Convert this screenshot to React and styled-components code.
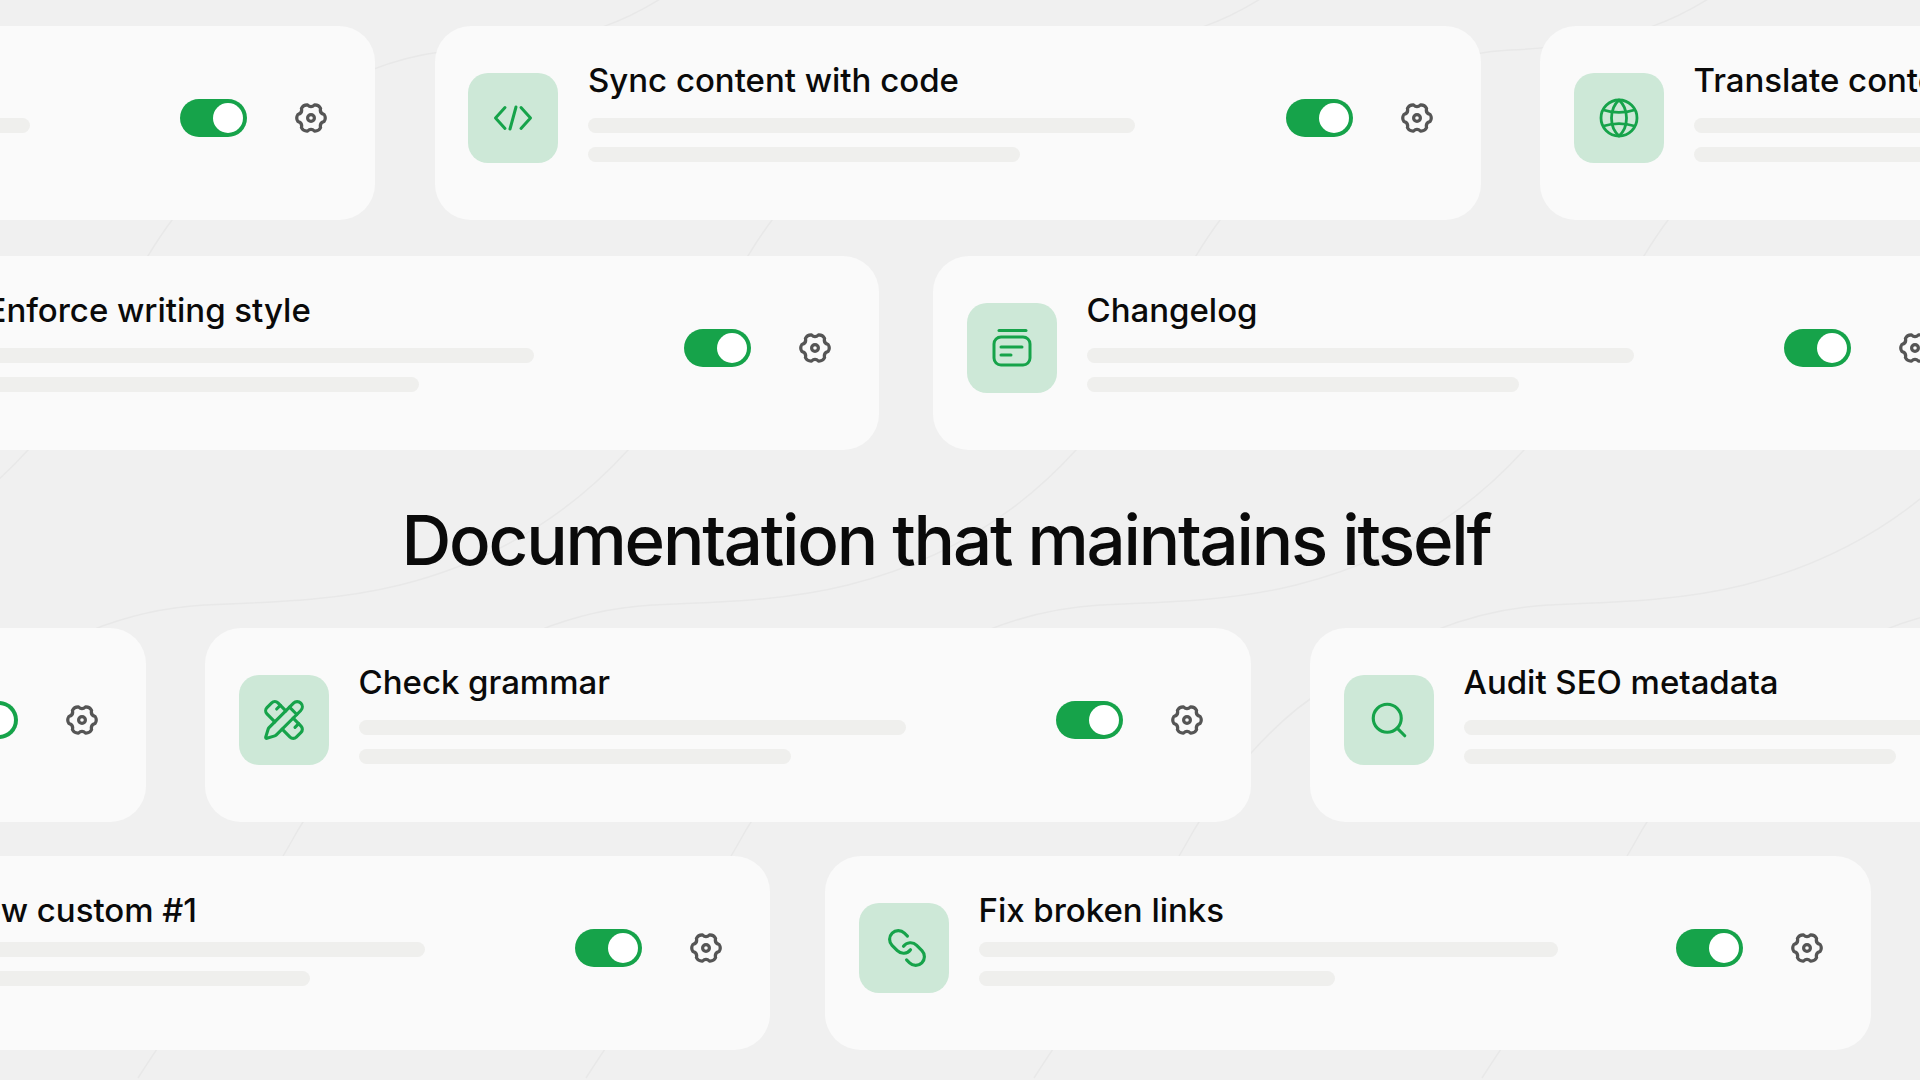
import React from "react";
import styled, { createGlobalStyle } from "styled-components";
import { PencilRuler, Search, Link } from "lucide-react";

const Global = createGlobalStyle`
  html, body { margin: 0; padding: 0; background: #f0f0f0; }
  body { font-family: Inter, "Liberation Sans", sans-serif; }
`;

const Page = styled.main`
  position: relative;
  width: 1920px;
  height: 1080px;
  overflow: hidden;
  background: #f0f0f0;
  padding-top: 26px;
  box-sizing: border-box;
`;

const Backdrop = styled.svg`
  position: absolute;
  inset: 0;
  width: 1920px;
  height: 1080px;
`;

const Stack = styled.div`
  position: relative;
  display: flex;
  flex-direction: column;
`;

const Row = styled.div`
  display: flex;
  gap: ${(p) => p.$gap}px;
  margin-left: ${(p) => p.$offset}px;
  margin-bottom: ${(p) => p.$after}px;
`;

const Hero = styled.div`
  height: 178px;
  box-sizing: border-box;
  padding: 2px 28px 0 0;
  display: flex;
  align-items: center;
  justify-content: center;
`;

const Heading = styled.h1`
  margin: 0;
  font-size: 69px;
  line-height: 84px;
  font-weight: 500;
  letter-spacing: -2.2px;
  color: #0a0a0a;
  white-space: nowrap;
`;

const Card = styled.article`
  flex: none;
  width: 1046px;
  height: 194px;
  box-sizing: border-box;
  display: flex;
  align-items: flex-start;
  padding: 34px 48px 0 33.5px;
  background: #fafafa;
  border-radius: 36px;
`;

const Tile = styled.div`
  flex: none;
  width: 90px;
  height: 90px;
  margin-top: 13px;
  display: flex;
  align-items: center;
  justify-content: center;
  background: #cde8d7;
  border-radius: 20px;
  color: #16a34a;
`;

const MirroredLink = styled(Link)`
  transform: scaleX(-1) translateX(-3px);
`;

const Body = styled.div`
  flex: 1;
  min-width: 0;
  margin-left: 30px;
`;

const Title = styled.h3`
  margin: 0;
  font-size: 33px;
  line-height: 41px;
  font-weight: 500;
  letter-spacing: -0.02px;
  color: #0a0a0a;
  white-space: nowrap;
`;

const Bars = styled.div`
  display: flex;
  flex-direction: column;
  gap: 14px;
  margin-top: ${(p) => (p.$tight ? 11 : 17)}px;
`;

const Bar = styled.div`
  height: 15px;
  width: ${(p) => p.$w}px;
  border-radius: 8px;
  background: #efefed;
`;

const Controls = styled.div`
  flex: none;
  height: 90px;
  margin-top: 13px;
  display: flex;
  align-items: center;
  gap: 48px;
`;

const Toggle = styled.div`
  width: 67px;
  height: 38px;
  box-sizing: border-box;
  padding: 4px;
  display: flex;
  justify-content: flex-end;
  border-radius: 19px;
  background: #16a34a;
`;

const Knob = styled.span`
  width: 30px;
  height: 30px;
  border-radius: 50%;
  background: #fff;
`;

const GearWrap = styled.div`
  width: 32px;
  height: 32px;
  display: flex;
  align-items: center;
  justify-content: center;
  color: #555;
`;

const Gear = () => {
  let d = "";
  for (let i = 0; i < 6; i++) {
    const a = (i * 60 * Math.PI) / 180;
    const b = ((i + 0.5) * 60 * Math.PI) / 180;
    const c = ((i + 1) * 60 * Math.PI) / 180;
    const P = (ang, r) => `${(16 + r * Math.cos(ang)).toFixed(2)} ${(16 + r * Math.sin(ang)).toFixed(2)}`;
    if (i === 0) d += `M${P(a - 0.26, 13.6)} `;
    d += `Q${P(a, 15.4)} ${P(a + 0.26, 13.6)} `;
    d += `Q${P(b, 9.6)} ${P(c - 0.26, 13.6)} `;
  }
  return (
    <svg width="32" height="32" viewBox="0 0 32 32" fill="none" stroke="currentColor" strokeWidth="3.2" strokeLinejoin="round">
      <path d={d + "Z"} />
      <circle cx="16" cy="16" r="3.4" />
    </svg>
  );
};

const CodeIcon = () => (
  <svg width="40" height="26" viewBox="0 0 40 26" fill="none" stroke="currentColor" strokeWidth="3" strokeLinecap="round" strokeLinejoin="round">
    <path d="M12 2.5 2.5 13 12 23.5" />
    <path d="M28 2.5 37.5 13 28 23.5" />
    <path d="M23 2 17 24" />
  </svg>
);

const GlobeIcon = () => (
  <svg width="40" height="40" viewBox="0 0 40 40" fill="none" stroke="currentColor" strokeWidth="2.8" strokeLinecap="round" strokeLinejoin="round">
    <circle cx="20" cy="20" r="18" />
    <path d="M20 2C10 11 10 29 20 38C30 29 30 11 20 2Z" />
    <path d="M4.5 12C14 15 26 15 35.5 12" />
    <path d="M4.5 28C14 25 26 25 35.5 28" />
  </svg>
);

const ChangelogIcon = () => (
  <svg width="40" height="40" viewBox="0 0 40 40" fill="none" stroke="currentColor" strokeWidth="3" strokeLinecap="round" strokeLinejoin="round">
    <path d="M7 2.5H34" />
    <rect x="2" y="9" width="36" height="28" rx="7" />
    <path d="M9 19H30" />
    <path d="M9 27H19" />
  </svg>
);

const icons = {
  code: <CodeIcon />,
  globe: <GlobeIcon />,
  log: <ChangelogIcon />,
  ruler: <PencilRuler size={44} strokeWidth={1.7} />,
  search: <Search size={42} strokeWidth={1.8} />,
  link: <MirroredLink size={42} strokeWidth={1.8} />,
};

const FeatureCard = ({ icon, title, w1 = 547, w2 = 432, tight }) => (
  <Card>
    <Tile>{icons[icon]}</Tile>
    <Body>
      <Title>{title}</Title>
      <Bars $tight={tight}>
        <Bar $w={w1} />
        <Bar $w={w2} />
      </Bars>
    </Body>
    <Controls>
      <Toggle>
        <Knob />
      </Toggle>
      <GearWrap>
        <Gear />
      </GearWrap>
    </Controls>
  </Card>
);

const WAVE =
  "M1300 -30C1240 20 1180 45 1062 50C960 55 860 120 772 220C720 290 690 380 628 450C560 525 480 565 400 585C340 600 280 602 204 605C120 610 60 640 -20 690C-70 720 -120 780 -150 830C-200 920 -260 1000 -310 1078";

export default function App() {
  return (
    <Page>
      <Global />
      <Backdrop viewBox="0 0 1920 1080" fill="none">
        {[-600, 0, 448, 896, 1344, 1792].map((dx) => (
          <path key={dx} d={WAVE} transform={`translate(${dx} 0)`} stroke="#e8e8e8" strokeWidth="1.5" />
        ))}
      </Backdrop>
      <Stack>
        <Row $gap={59.5} $offset={-671} $after={36}>
          <FeatureCard icon="log" title="Write first draft" />
          <FeatureCard icon="code" title="Sync content with code" />
          <FeatureCard icon="globe" title="Translate content" />
        </Row>
        <Row $gap={54} $offset={-167} $after={0}>
          <FeatureCard icon="ruler" title="Enforce writing style" />
          <FeatureCard icon="log" title="Changelog" />
        </Row>
        <Hero>
          <Heading>Documentation that maintains itself</Heading>
        </Hero>
        <Row $gap={59} $offset={-900} $after={34}>
          <FeatureCard icon="code" title="Update references" />
          <FeatureCard icon="ruler" title="Check grammar" />
          <FeatureCard icon="search" title="Audit SEO metadata" />
        </Row>
        <Row $gap={55} $offset={-276} $after={0}>
          <FeatureCard icon="code" title="Workflow custom #1" tight />
          <FeatureCard icon="link" title="Fix broken links" w1={579} w2={356} tight />
        </Row>
      </Stack>
    </Page>
  );
}
